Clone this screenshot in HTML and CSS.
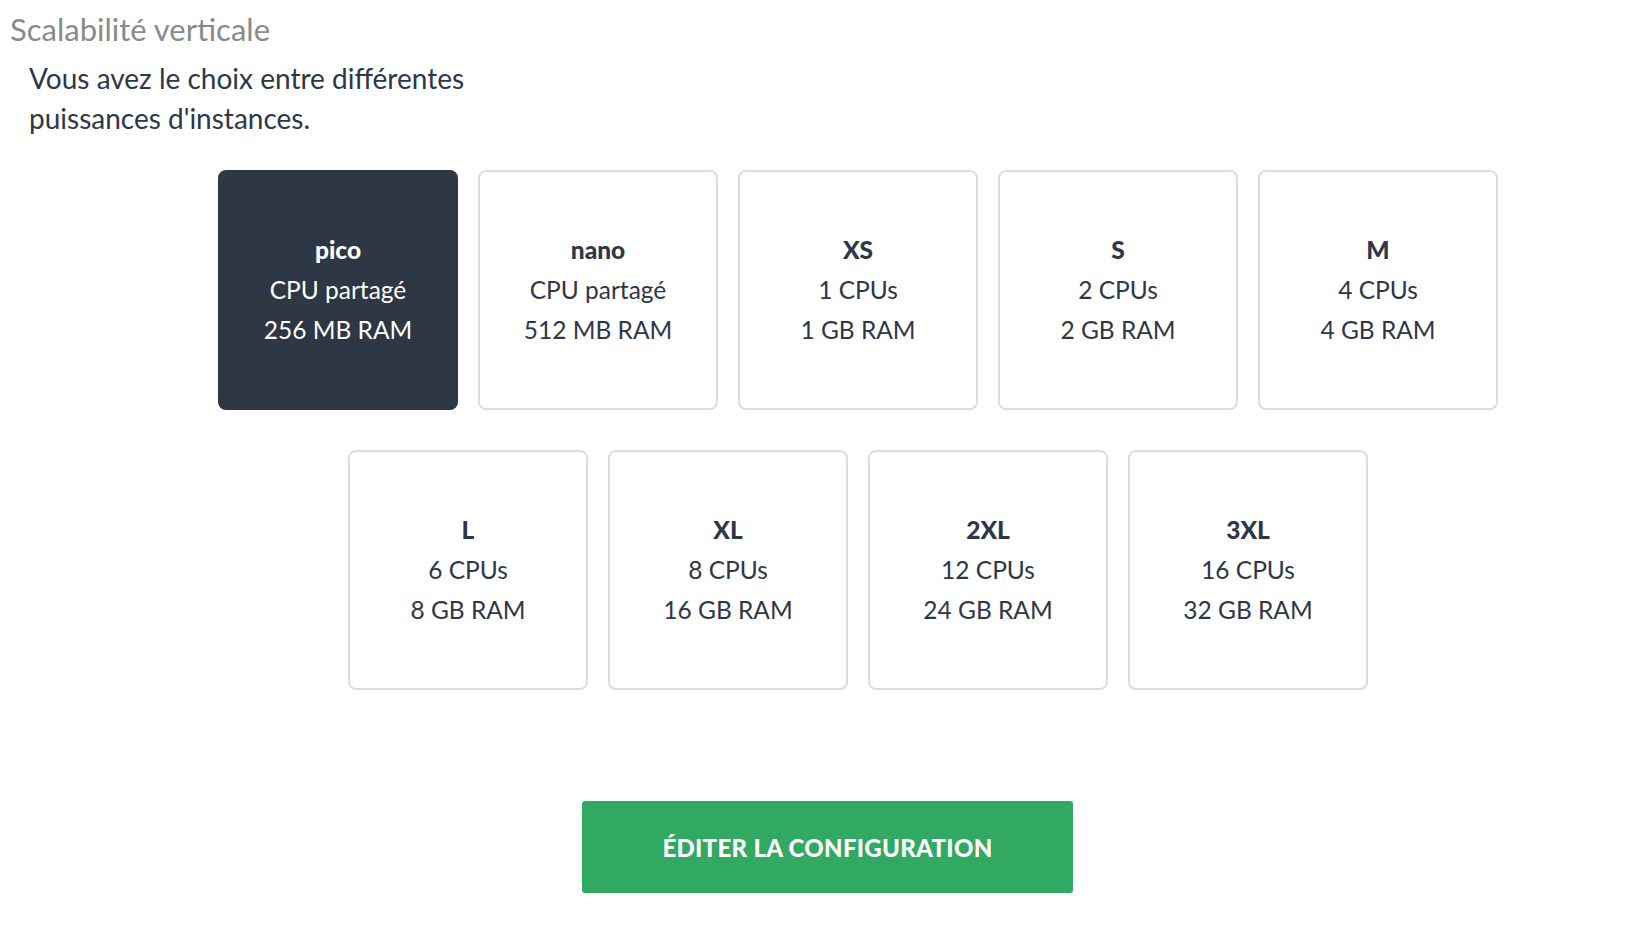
FILE: index.html
```html
<!DOCTYPE html>
<html lang="fr">
<head>
<meta charset="utf-8">
<title>Scalabilité verticale</title>
<link rel="stylesheet" href="styles.css">
</head>
<body>
<section class="scaling">
  <h2 class="scaling-title">Scalabilité verticale</h2>
  <p class="scaling-desc">Vous avez le choix entre différentes puissances d'instances.</p>
  <div class="sizes">
    <div class="size size--active"><strong class="size-name">pico</strong><span>CPU partagé</span><span>256 MB RAM</span></div>
    <div class="size"><strong class="size-name">nano</strong><span>CPU partagé</span><span>512 MB RAM</span></div>
    <div class="size"><strong class="size-name">XS</strong><span>1 CPUs</span><span>1 GB RAM</span></div>
    <div class="size"><strong class="size-name">S</strong><span>2 CPUs</span><span>2 GB RAM</span></div>
    <div class="size"><strong class="size-name">M</strong><span>4 CPUs</span><span>4 GB RAM</span></div>
    <div class="size"><strong class="size-name">L</strong><span>6 CPUs</span><span>8 GB RAM</span></div>
    <div class="size"><strong class="size-name">XL</strong><span>8 CPUs</span><span>16 GB RAM</span></div>
    <div class="size"><strong class="size-name">2XL</strong><span>12 CPUs</span><span>24 GB RAM</span></div>
    <div class="size"><strong class="size-name">3XL</strong><span>16 CPUs</span><span>32 GB RAM</span></div>
  </div>
  <div class="actions">
    <button class="btn-edit" type="button">Éditer la configuration</button>
  </div>
</section>
</body>
</html>
```

FILE: styles.css
```css
html, body {
  margin: 0;
  padding: 0;
  background: #ffffff;
}

body {
  font-family: Lato, "Liberation Sans", sans-serif;
  color: #2d3748;
}

.scaling {
  width: 1640px;
}

.scaling-title {
  margin: 0;
  padding: 10px 0 0 10px;
  font-size: 31px;
  line-height: 38px;
  font-weight: 400;
  color: #8a8a8a;
}

.scaling-desc {
  margin: 10px 0 0 29px;
  width: 470px;
  font-size: 28px;
  line-height: 40px;
  color: #2d3748;
}

.sizes {
  display: flex;
  flex-wrap: wrap;
  justify-content: center;
  gap: 40px 20px;
  width: 1300px;
  margin: 32px 0 0 208px;
}

.size {
  box-sizing: border-box;
  width: 240px;
  height: 240px;
  border: 2px solid #dddddd;
  border-radius: 8px;
  background: #ffffff;
  display: flex;
  flex-direction: column;
  align-items: center;
  justify-content: center;
  font-size: 24.5px;
  line-height: 40px;
  color: #2d3748;
}

.size-name {
  font-weight: 900;
}

.size--active {
  background: #2e3744;
  border-color: #2e3744;
  color: #ffffff;
}

.actions {
  display: flex;
  justify-content: center;
  margin: 111px 0 0 15px;
}

.btn-edit {
  width: 491px;
  height: 92px;
  border: 0;
  border-radius: 3px;
  background: #32a962;
  color: #ffffff;
  font-family: Lato, "Liberation Sans", sans-serif;
  font-size: 24px;
  font-weight: 900;
  letter-spacing: 0.3px;
  text-transform: uppercase;
  cursor: pointer;
}
```
